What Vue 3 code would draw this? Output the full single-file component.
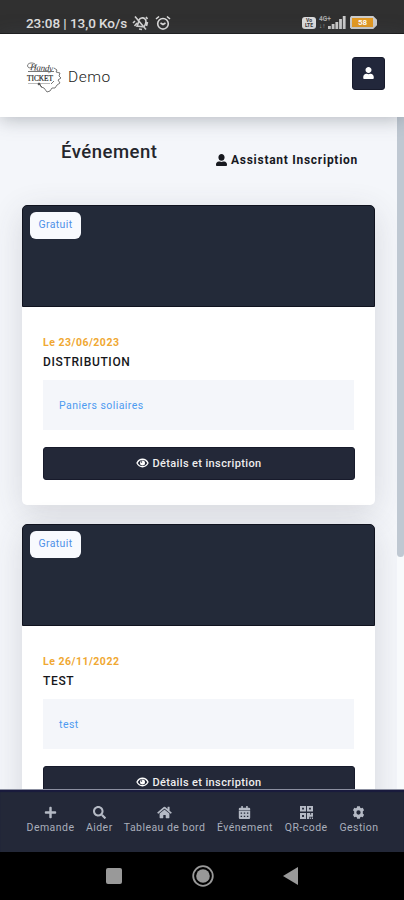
<script setup>
import {ref} from 'vue';

const events = ref([
  { id: 1, price: 'Gratuit', date: 'Le 23/06/2023', title: 'DISTRIBUTION', text: 'Paniers soliaires' },
  { id: 2, price: 'Gratuit', date: 'Le 26/11/2022', title: 'TEST', text: 'test' },
]);

const menu = [
  { label: 'Demande', width: 49, box: '0 0 448 512', path: 'M416 208H272V64c0-17.7-14.3-32-32-32h-32c-17.7 0-32 14.3-32 32v144H32c-17.7 0-32 14.3-32 32v32c0 17.7 14.3 32 32 32h144v144c0 17.7 14.3 32 32 32h32c17.7 0 32-14.3 32-32V304h144c17.7 0 32-14.3 32-32v-32c0-17.7-14.3-32-32-32z' },
  { label: 'Aider', width: 27, box: '0 0 512 512', path: 'M505 442.7L405.3 343c-4.5-4.5-10.6-7-17-7H372c27.6-35.3 44-79.7 44-128C416 93.1 322.9 0 208 0S0 93.1 0 208s93.1 208 208 208c48.3 0 92.7-16.4 128-44v16.3c0 6.4 2.5 12.5 7 17l99.7 99.7c9.4 9.4 24.6 9.4 33.9 0l28.3-28.3c9.4-9.4 9.4-24.6.1-34zM208 336c-70.7 0-128-57.2-128-128 0-70.7 57.2-128 128-128 70.7 0 128 57.2 128 128 0 70.7-57.2 128-128 128z' },
  { label: 'Tableau de bord', width: 82, box: '0 0 576 512', path: 'M280.37 148.26L96 300.11V464a16 16 0 0 0 16 16l112.06-.29a16 16 0 0 0 15.92-16V368a16 16 0 0 1 16-16h64a16 16 0 0 1 16 16v95.64a16 16 0 0 0 16 16.05L464 480a16 16 0 0 0 16-16V300L295.67 148.26a12.19 12.19 0 0 0-15.3 0zM571.6 251.47L488 182.56V44.05a12 12 0 0 0-12-12h-56a12 12 0 0 0-12 12v72.61L318.47 43a48 48 0 0 0-61 0L4.34 251.47a12 12 0 0 0-1.6 16.9l25.5 31A12 12 0 0 0 45.15 301l235.22-193.74a12.19 12.19 0 0 1 15.3 0L530.9 301a12 12 0 0 0 16.9-1.6l25.5-31a12 12 0 0 0-1.7-16.93z' },
  { label: 'Événement', width: 57, box: '0 0 448 512', path: 'M0 180V112a48 48 0 0 1 48-48h48V12a12 12 0 0 1 12-12h40a12 12 0 0 1 12 12v52h128V12a12 12 0 0 1 12-12h40a12 12 0 0 1 12 12v52h48a48 48 0 0 1 48 48v68zM0 192h448v272a48 48 0 0 1-48 48H48a48 48 0 0 1-48-48zM72 256v48h56v-48zM196 256v48h56v-48zM320 256v48h56v-48zM72 384v48h56v-48zM196 384v48h56v-48zM320 384v48h56v-48z' },
  { label: 'QR-code', width: 44, box: '0 0 448 448', path: 'M0 0h208v192H0zM72 64v56h64V64zM240 0h208v192H240zM312 64v56h64V64zM0 240h208v208H0zM72 312v64h64v-64zM240 240h112v64h32v-64h64v128H320v80h-80zM352 400h32v48h-32zM416 400h32v48h-32z' },
  { label: 'Gestion', width: 40, box: '0 0 512 512', path: 'M202 8h108l14 65 34 20 64-21 54 94-49 44v92l49 44-54 94-64-21-34 20-14 65H202l-14-65-34-20-64 21-54-94 49-44v-92l-49-44 54-94 64 21 34-20zM256 172a84 84 0 1 0 0 168 84 84 0 1 0 0-168z' },
];
</script>

<template>
  <div class="screen">
    <div class="status">
      <span class="clock">23:08 | 13,0 Ko/s</span>
      <svg class="mute" width="17" height="16" viewBox="0 0 17 16" fill="none" stroke="#d4d4d4" stroke-width="1.6">
        <path d="M5 11l1-2 1-4c1-2 4-3 6-1s1 4 0 6l-1 2zM7 14l3 .500M3 1.500l11 13M1 8l2-2M2.500 11L5 8M14 2l1.500 2M15.500 7l-1 4"/>
      </svg>
      <svg class="alarm" width="16" height="16" viewBox="0 0 16 16" fill="none" stroke="#ddd" stroke-width="1.600">
        <circle cx="8" cy="8.800" r="5.300"/>
        <path d="M1 4l3-2.500M15 4l-3-2.500M5.500 8l2.500 1.500L10.500 8"/>
      </svg>
      <div class="grow"></div>
      <div class="volte"><span>Vo</span><span>LTE</span></div>
      <div class="network"><span>4G+</span><span>↓↑</span></div>
      <svg class="signal" width="19" height="13" viewBox="0 0 19 13" fill="#ccc">
        <path d="M1 10h2.800v3H1zM4.700 8h2.800v5H4.700zM8.400 6h2.800v7H8.400zM12.100 3h2.800v10h-2.800zM15.800 0h2.800v13h-2.800z"/>
      </svg>
      <div class="battery"><span>58</span></div>
    </div>

    <header class="header">
      <svg class="logo" width="36" height="32" viewBox="0 0 36 32" fill="none" stroke="#555" stroke-width=".8">
        <text class="script" x="4" y="8" transform="rotate(4 4 8)" textLength="23">Handy</text>
        <path d="M9 2C5-.5 0 2 2 5c1 2 5 0 8-2M2 9.500h26"/>
        <path d="M2 21.500h22" stroke="#aaa"/>
        <text class="ticket" x="1" y="18.500" textLength="26" lengthAdjust="spacingAndGlyphs">TICKET</text>
        <path d="M28 6l3 2-1 2 4 1-1 3 2 2-3 2 2 3-3 2-2 3-3 0-2 3-3 1-3-4-3-1-1-3M14 23l2 2M28 19l-3 3"/>
        <circle cx="13" cy="22" r="1" fill="#333"/>
      </svg>
      <span class="brand">Demo</span>
      <button class="account">
        <svg width="11" height="12" viewBox="0 0 448 512" fill="#fff">
          <path d="M224 256c70.700 0 128-57.300 128-128S294.700 0 224 0 96 57.300 96 128s57.300 128 128 128zm89.600 32h-16.700c-22.200 10.200-46.900 16-72.900 16s-50.600-5.800-72.900-16h-16.700C60.200 288 0 348.200 0 422.400V464c0 26.500 21.500 48 48 48h352c26.500 0 48-21.500 48-48v-41.600c0-74.200-60.200-134.400-134.400-134.400z"/>
        </svg>
      </button>
    </header>

    <div class="viewport">
      <main class="content">
        <div class="heading">
          <h1>Événement</h1>
          <a class="assistant">
            <svg width="11" height="12" viewBox="0 0 512 512" preserveAspectRatio="none" fill="#17191f">
              <path d="M256 288c79.500 0 144-64.500 144-144S335.500 0 256 0 112 64.500 112 144s64.500 144 144 144zm128 32h-55.100c-22.200 10.200-46.900 16-72.900 16s-50.600-5.800-72.900-16H128C57.300 320 0 377.300 0 448v16c0 26.500 21.500 48 48 48h416c26.500 0 48-21.500 48-48v-16c0-70.700-57.300-128-128-128z"/>
            </svg>
            <span>Assistant Inscription</span>
          </a>
        </div>

        <article v-for="event in events" :key="event.id" class="card">
          <div class="cover">
            <span class="badge">{{ event.price }}</span>
          </div>
          <div class="body">
            <div class="date">{{ event.date }}</div>
            <h2>{{ event.title }}</h2>
            <div class="description">{{ event.text }}</div>
            <button class="details">
              <svg width="13" height="10" viewBox="0 0 26 20" fill="none" stroke="#fff">
                <path d="M2 10C7 0 19 0 24 10 19 20 7 20 2 10z" stroke-width="2.600"/>
                <circle cx="13" cy="10" r="5" fill="#fff" stroke="none"/>
                <circle cx="11" cy="8" r="1.500" fill="#232838" stroke="none"/>
              </svg>
              <span>Détails et inscription</span>
            </button>
          </div>
        </article>
      </main>
      <div class="scrollbar"><div class="thumb"></div></div>
    </div>

    <nav class="menu">
      <a v-for="item in menu" :key="item.label" class="item" :style="{ width: item.width + 'px' }">
        <svg width="15" height="13" :viewBox="item.box">
          <path :d="item.path" fill="#b5bac5" fill-rule="evenodd"/>
        </svg>
        <span>{{ item.label }}</span>
      </a>
    </nav>

    <div class="system">
      <svg width="16" height="16" viewBox="0 0 16 16"><rect width="16" height="16" rx="2" fill="#999"/></svg>
      <svg width="22" height="22" viewBox="0 0 22 22">
        <circle cx="11" cy="11" r="9.800" fill="none" stroke="#999" stroke-width="1.800"/>
        <circle cx="11" cy="11" r="6.800" fill="#999"/>
      </svg>
      <svg width="16" height="18" viewBox="0 0 16 18"><path d="M0 9L15 0v18z" fill="#999"/></svg>
    </div>
  </div>
</template>

<style>
body {
  margin: 0;
  background: #000;
}
</style>

<style scoped>
.screen {
  width: 404px;
  height: 900px;
  display: flex;
  flex-direction: column;
  overflow: hidden;
  font-family: Roboto, "Liberation Sans", sans-serif;
  background: #f4f6fa;
}

.status {
  height: 34px;
  flex: none;
  box-sizing: border-box;
  padding: 12px 27px 0 26px;
  display: flex;
  align-items: center;
  background: #303030;
  border-bottom: 1px solid #191919;
  color: #e2e2e2;
}

.clock {
  width: 106px;
  font-size: 13.5px;
  font-weight: 500;
  letter-spacing: -.05px;
  white-space: nowrap;
}

.alarm {
  margin-left: 6px;
}

.grow {
  flex: 1;
}

.volte {
  width: 14px;
  height: 12px;
  border-radius: 3px;
  background: #ddd;
  color: #333;
  display: flex;
  flex-direction: column;
  align-items: center;
  justify-content: center;
  font-size: 5px;
  line-height: 5px;
  font-weight: 700;
}

.network {
  width: 12px;
  height: 13px;
  margin-left: 3px;
  display: flex;
  flex-direction: column;
  font-size: 6.5px;
  line-height: 7px;
  font-weight: 700;
  color: #aaa;
}

.signal {
  margin-left: -4px;
}

.battery {
  width: 27px;
  height: 13px;
  margin-left: 4px;
  box-sizing: border-box;
  padding: 2px 4px 2px 2px;
  background: #ccc;
  clip-path: polygon(4% 0, 86% 0, 100% 28%, 100% 72%, 86% 100%, 4% 100%, 0 88%, 0 12%);
}

.battery span {
  display: block;
  height: 9px;
  background: #e49a22;
  color: #fff;
  font-size: 8px;
  line-height: 9px;
  font-weight: 700;
  text-align: center;
}

.header {
  height: 83px;
  flex: none;
  box-sizing: border-box;
  padding: 0 19px 2px 26px;
  display: flex;
  align-items: center;
  background: #fff;
  box-shadow: 0 2px 18px rgba(70, 80, 90, .38);
  z-index: 1;
}

.logo {
  margin-top: 7px;
}

.script {
  font: italic 9px "Liberation Serif", serif;
  fill: #333;
  stroke: none;
}

.ticket {
  font: 9px "Liberation Serif", serif;
  fill: #222;
  stroke: #222;
  stroke-width: .2;
}

.brand {
  margin-left: 6px;
  margin-top: 4px;
  flex: 1;
  font-size: 15.5px;
  font-weight: 300;
  letter-spacing: .5px;
  color: #222;
}

.account {
  width: 33px;
  height: 33px;
  margin-bottom: 2px;
  padding: 0 0 2px;
  display: flex;
  align-items: center;
  justify-content: center;
  border: 1px solid #171a2b;
  border-radius: 3px;
  background: #22273b;
}

.viewport {
  height: 672px;
  flex: none;
  display: flex;
  overflow: hidden;
}

.content {
  width: 397px;
  box-sizing: border-box;
  padding: 0 22px;
  overflow: hidden;
}

.heading {
  height: 88px;
  display: flex;
  padding: 0 0 0 39px;
}

.heading h1 {
  width: 155px;
  margin: 23px 0 0;
  font-size: 18.5px;
  line-height: 24px;
  font-weight: 500;
  letter-spacing: .5px;
  color: #24262c;
}

.assistant {
  height: 14px;
  margin-top: 36px;
  display: flex;
  align-items: center;
  gap: 4px;
  white-space: nowrap;
  font-size: 12px;
  font-weight: 700;
  letter-spacing: .73px;
  color: #17191f;
}

.card {
  width: 353px;
  height: 300px;
  margin-bottom: 19px;
  border-radius: 5px;
  background: #fff;
  box-shadow: 0 8px 32px rgba(60, 65, 75, .16);
}

.cover {
  height: 102px;
  box-sizing: border-box;
  padding: 6px 7px;
  border: 1px solid #10131f;
  border-radius: 5px 5px 0 0;
  background: #232a39;
}

.badge {
  display: block;
  width: 51px;
  height: 27px;
  border-radius: 6px;
  background: #f8fafe;
  text-align: center;
  font-size: 10.5px;
  line-height: 26px;
  letter-spacing: .35px;
  color: #4e91e8;
}

.body {
  padding: 29px 21px 0;
}

.date {
  font-size: 10.5px;
  line-height: 13px;
  font-weight: 700;
  letter-spacing: .5px;
  color: #f0a832;
}

.body h2 {
  margin: 5px 0 10px;
  font-size: 12px;
  line-height: 16px;
  font-weight: 500;
  letter-spacing: .65px;
  color: #16171b;
}

.description {
  height: 50px;
  padding-left: 16px;
  background: #f4f6fa;
  font-size: 10.5px;
  line-height: 51px;
  letter-spacing: .45px;
  color: #4e9bf0;
}

.details {
  width: 312px;
  height: 33px;
  margin-top: 17px;
  padding: 0 0 1px;
  display: flex;
  align-items: center;
  justify-content: center;
  gap: 3px;
  border: 1px solid #171a2b;
  border-radius: 3px;
  background: #232838;
  color: #eee;
  font-family: inherit;
  font-size: 11px;
  font-weight: 500;
  letter-spacing: .37px;
}

.scrollbar {
  width: 7px;
  background: #f8fafc;
}

.thumb {
  height: 440px;
  border-radius: 0 0 4px 4px;
  background: #bfc8d2;
}

.menu {
  height: 63px;
  flex: none;
  box-sizing: border-box;
  padding: 16px 25px 0 26px;
  display: flex;
  justify-content: space-between;
  border-top: 1px solid #8b8fa0;
  background: #232838;
  box-shadow: inset 0 2px 1px #191a3d;
  z-index: 1;
}

.item {
  display: flex;
  flex-direction: column;
  align-items: center;
  gap: 2px;
  white-space: nowrap;
  font-size: 10.5px;
  line-height: 14px;
  letter-spacing: .45px;
  color: #a9aebb;
}

.system {
  flex: 1;
  box-sizing: border-box;
  padding: 0 105px 0 106px;
  display: flex;
  align-items: center;
  justify-content: space-between;
  background: #000;
}
</style>
